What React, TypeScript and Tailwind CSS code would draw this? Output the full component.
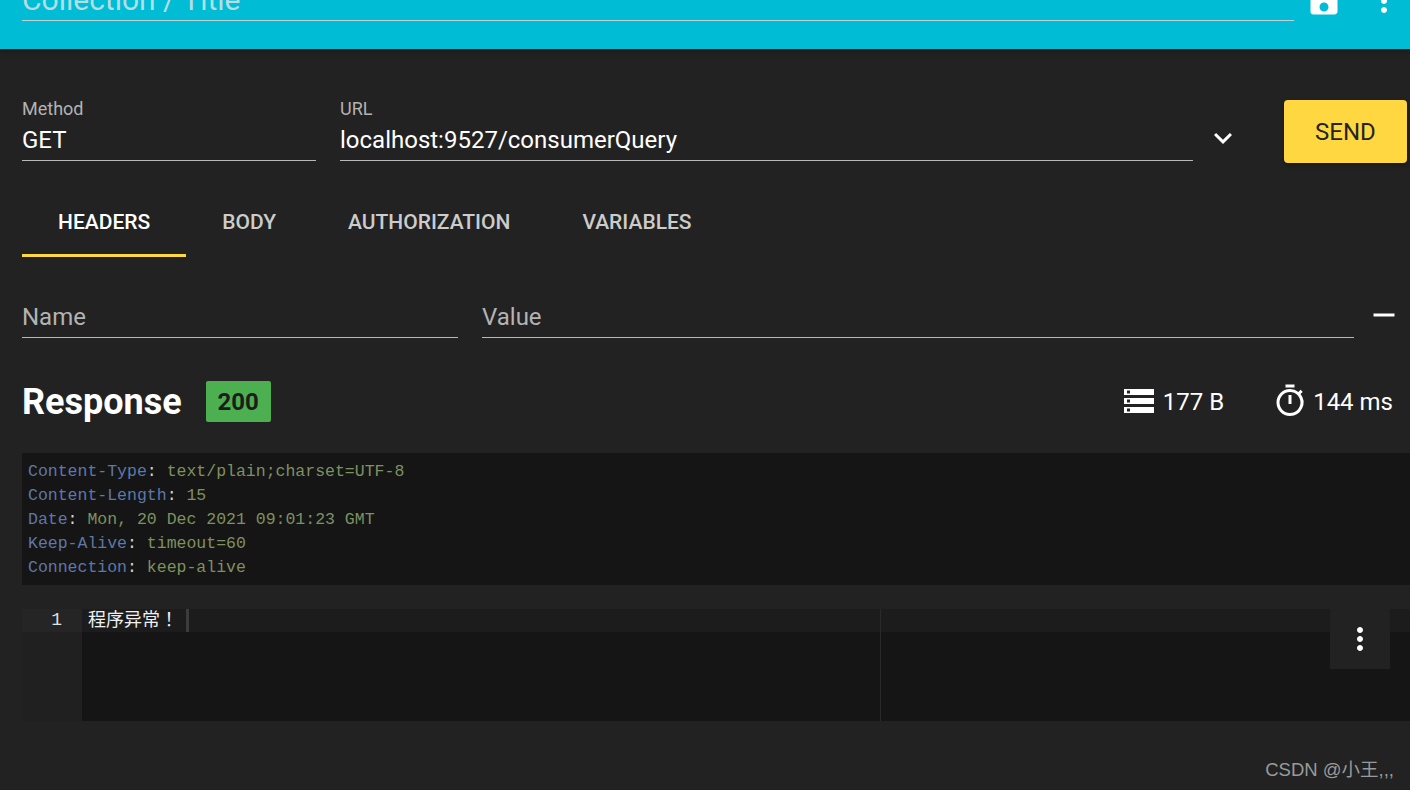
import React from "react";
import { MdExpandMore, MdMoreVert, MdOutlineTimer, MdRemove, MdSave, MdStorage } from "react-icons/md";

const headers = [
  ["Content-Type", "text/plain;charset=UTF-8"],
  ["Content-Length", "15"],
  ["Date", "Mon, 20 Dec 2021 09:01:23 GMT"],
  ["Keep-Alive", "timeout=60"],
  ["Connection", "keep-alive"],
];

function Field({ label, value, className }: { label: string; value: string; className: string }) {
  return (
    <div className={className}>
      <div className="text-[18px] leading-[24px] text-[#b3b3b3]">{label}</div>
      <div className="h-[40px] border-b border-[#b8b8b8] text-[24px] leading-[38px] text-white">{value}</div>
    </div>
  );
}

function Tab({ label, active }: { label: string; active?: boolean }) {
  return (
    <div
      className={
        "flex h-[71px] items-center px-[36px] text-[21px] font-medium " +
        (active ? "border-b-[3px] border-[#ffd740] pt-[6px] text-white" : "pt-[3px] text-[#cccccc]")
      }
    >
      {label}
    </div>
  );
}

export default function App() {
  return (
    <div className="relative h-[790px] w-[1410px] overflow-hidden bg-[#222222] font-['Roboto',sans-serif]">
      <header className="flex h-[49px] items-start gap-[12px] overflow-hidden bg-[#00bcd4] pl-[22px] shadow-[0_2px_6px_rgba(0,0,0,0.3)]">
        <div className="mt-[-16px] h-[37px] w-[1272px] shrink-0 border-b border-[#b9d3d8] text-[30px] leading-[32px] text-[#b4dde4]">
          Collection / Title
        </div>
        <MdSave className="mt-[-17px] shrink-0 text-white" size={36} />
        <MdMoreVert className="mt-[-17px] ml-[12px] shrink-0 text-white" size={36} />
      </header>

      <section className="flex items-start pl-[22px] pt-[48px]">
        <Field className="w-[294px] shrink-0" label="Method" value="GET" />
        <Field className="ml-[24px] w-[853px] shrink-0" label="URL" value="localhost:9527/consumerQuery" />
        <MdExpandMore className="ml-[12px] mt-[23px] shrink-0 text-white" size={36} />
        <button className="ml-[43px] mt-[3px] h-[63px] w-[123px] shrink-0 rounded-[4px] bg-[#ffd740] text-[24px] text-[#242424] shadow-[0_2px_4px_rgba(0,0,0,0.3)]">
          SEND
        </button>
      </section>

      <nav className="flex px-[22px] pt-[23px]">
        <Tab label="HEADERS" active />
        <Tab label="BODY" />
        <Tab label="AUTHORIZATION" />
        <Tab label="VARIABLES" />
      </nav>

      <section className="flex items-start gap-[24px] pl-[22px] pt-[45px]">
        <div className="h-[36px] w-[436px] shrink-0 border-b border-[#b8b8b8] text-[24px] leading-[30px] text-[#b3b3b3]">Name</div>
        <div className="h-[36px] w-[872px] shrink-0 border-b border-[#b8b8b8] text-[24px] leading-[30px] text-[#b3b3b3]">Value</div>
        <MdRemove className="ml-[-12px] mt-[-5px] shrink-0 text-white" size={36} />
      </section>

      <section className="flex items-center px-[22px] pt-[41px]">
        <h2 className="pt-[2px] text-[36px] font-bold leading-[42px] text-white">Response</h2>
        <span className="ml-[24px] flex h-[41px] w-[65px] items-center justify-center rounded-[2px] bg-[#4caf50] pt-[2px] text-[24px] font-bold text-[#1c1c1c]">
          200
        </span>
        <div className="ml-auto flex items-center text-[24px] text-white">
          <MdStorage size={36} />
          <span className="ml-[6px] pt-[2px]">177 B</span>
          <MdOutlineTimer className="ml-[48px]" size={36} />
          <span className="ml-[5px] mr-[-5px] pt-[2px]">144 ms</span>
        </div>
      </section>

      <section className="ml-[22px] mt-[30px] h-[132px] bg-[#151515] pl-[6px] pt-[7px] font-['Liberation_Mono',monospace] text-[16.5px] leading-[24px]">
        {headers.map(([name, value]) => (
          <div key={name}>
            <span className="text-[#5f78a8]">{name}</span>
            <span className="text-[#d4d4d4]">: </span>
            <span className="text-[#7e9160]">{value}</span>
          </div>
        ))}
      </section>

      <section className="relative ml-[22px] mt-[24px] flex h-[112px] bg-[#151515] font-['Liberation_Mono','Noto_Sans_CJK_JP',monospace]">
        <div className="w-[60px] shrink-0 bg-[#202020]">
          <div className="h-[23px] bg-[#252525] pr-[20px] text-right text-[18px] leading-[23px] text-[#e0e0e0]">1</div>
        </div>
        <div className="flex h-[23px] min-w-0 flex-1 bg-[#1c1c1c]">
          <span className="ml-[6px] border-r-[3px] border-[#3c3c3c] pr-[8px] text-[18px] leading-[25px] text-[#f0f0f0]">程序异常！</span>
        </div>
        <div className="absolute bottom-0 left-[858px] top-0 w-px bg-[#2a2a2a]" />
        <div className="absolute right-[20px] top-0 flex h-[60px] w-[60px] items-center justify-center bg-[#222222]">
          <MdMoreVert className="text-white" size={36} />
        </div>
      </section>

      <div className="absolute bottom-[6px] right-[16px] font-['Liberation_Sans','Noto_Sans_CJK_SC',sans-serif] text-[18.5px] leading-[28px] text-[#9a9a9a]">
        CSDN @小王,,,
      </div>
    </div>
  );
}
